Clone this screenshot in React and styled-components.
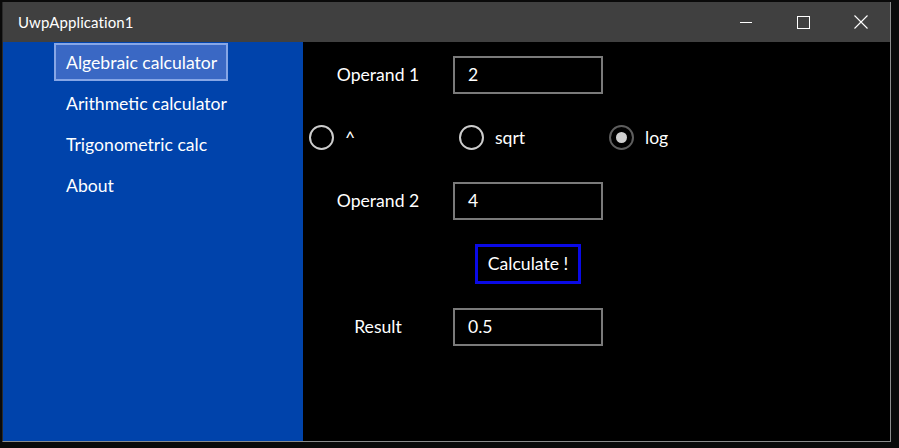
import React, { useState } from 'react';
import styled, { createGlobalStyle } from 'styled-components';

const GlobalStyle = createGlobalStyle`
  html, body {
    margin: 0;
    padding: 0;
    background: #0a0a0a;
  }
  body {
    font-family: Lato, "Open Sans", sans-serif;
  }
`;

const Desktop = styled.div`
  width: 899px;
  height: 448px;
  padding: 2px 0 0 2px;
  box-sizing: border-box;
  overflow: hidden;
`;

const Window = styled.div`
  width: 889px;
  height: 440px;
  display: flex;
  flex-direction: column;
  border-left: 1px solid #2a2a2a;
  border-right: 1px solid #8c8c8c;
  border-bottom: 1px solid #8c8c8c;
  box-sizing: border-box;
  background: #000;
`;

const TitleBar = styled.div`
  height: 40px;
  flex: 0 0 40px;
  background: #404040;
  display: flex;
  align-items: center;
  color: #fff;
`;

const Title = styled.div`
  flex: 1;
  padding-left: 15px;
  font-size: 15px;
  letter-spacing: 0.1px;
`;

const Controls = styled.div`
  display: flex;
  height: 100%;
`;

const ControlButton = styled.div`
  width: 57.5px;
  height: 100%;
  display: flex;
  align-items: center;
  justify-content: center;
`;

const Body = styled.div`
  flex: 1;
  display: flex;
  min-height: 0;
`;

const Sidebar = styled.nav`
  width: 300px;
  flex: 0 0 300px;
  background: #0043ab;
  padding: 1px 0 0 51px;
  box-sizing: border-box;
  display: flex;
  flex-direction: column;
  align-items: flex-start;
  gap: 3px;
`;

const NavItem = styled.div`
  height: 38px;
  box-sizing: border-box;
  display: flex;
  align-items: center;
  padding: 1px 9px 0 10px;
  color: #fff;
  font-size: 17.6px;
  border: 2px solid ${p => (p.$active ? '#86a6e6' : 'transparent')};
  background: ${p => (p.$active ? '#3a68c4' : 'transparent')};
`;

const Content = styled.main`
  flex: 1;
  background: #000;
  display: grid;
  grid-template-columns: 150px 150px 150px;
  grid-auto-rows: 63px;
  align-items: center;
  color: #fff;
  font-size: 17.6px;
  padding-top: 1px;
`;

const Label = styled.div`
  text-align: center;
`;

const Field = styled.div`
  height: 38px;
  box-sizing: border-box;
  border: 2px solid #7a7a7a;
  display: flex;
  align-items: center;
  padding-left: 13px;
`;

const RadioRow = styled.div`
  grid-column: 1 / span 3;
  display: grid;
  grid-template-columns: repeat(3, 150px);
  align-items: center;
`;

const RadioOption = styled.label`
  display: flex;
  align-items: center;
  gap: 11px;
  padding-left: 6px;
  cursor: pointer;
`;

const RadioCircle = styled.span`
  width: 25px;
  height: 25px;
  box-sizing: border-box;
  border-radius: 50%;
  border: 2px solid ${p => (p.$checked ? '#5e5e5e' : '#cdcdcd')};
  display: flex;
  align-items: center;
  justify-content: center;

  &::after {
    content: '';
    width: 11px;
    height: 11px;
    border-radius: 50%;
    background: ${p => (p.$checked ? '#cfcfcf' : 'transparent')};
  }
`;

const ButtonCell = styled.div`
  grid-column: 2;
  display: flex;
  justify-content: center;
`;

const CalcButton = styled.button`
  height: 40px;
  padding: 0 10px;
  background: #000;
  color: #fff;
  border: 3px solid #0a0ae6;
  font-family: inherit;
  font-size: 17.6px;
`;

const Spacer = styled.div``;

const navItems = ['Algebraic calculator', 'Arithmetic calculator', 'Trigonometric calc', 'About'];
const ops = ['^', 'sqrt', 'log'];

export default function App() {
  const [op, setOp] = useState('log');

  return (
    <>
      <GlobalStyle />
      <Desktop>
        <Window>
          <TitleBar>
            <Title>UwpApplication1</Title>
            <Controls>
              <ControlButton>
                <svg width="12" height="12" viewBox="0 0 12 12">
                  <path d="M0 6.5h12" stroke="#fff" strokeWidth="1" />
                </svg>
              </ControlButton>
              <ControlButton>
                <svg width="13" height="13" viewBox="0 0 13 13">
                  <rect x="0.5" y="0.5" width="12" height="12" fill="none" stroke="#fff" strokeWidth="1" />
                </svg>
              </ControlButton>
              <ControlButton>
                <svg width="14" height="14" viewBox="0 0 14 14">
                  <path d="M0.5 0.5L13.5 13.5M13.5 0.5L0.5 13.5" stroke="#fff" strokeWidth="1.1" />
                </svg>
              </ControlButton>
            </Controls>
          </TitleBar>
          <Body>
            <Sidebar>
              {navItems.map((item, i) => (
                <NavItem key={item} $active={i === 0}>{item}</NavItem>
              ))}
            </Sidebar>
            <Content>
              <Label>Operand 1</Label>
              <Field>2</Field>
              <Spacer />

              <RadioRow>
                {ops.map(o => (
                  <RadioOption key={o} onClick={() => setOp(o)}>
                    <RadioCircle $checked={op === o} />
                    <span>{o}</span>
                  </RadioOption>
                ))}
              </RadioRow>

              <Label>Operand 2</Label>
              <Field>4</Field>
              <Spacer />

              <ButtonCell>
                <CalcButton>Calculate !</CalcButton>
              </ButtonCell>
              <Spacer />

              <Label>Result</Label>
              <Field>0.5</Field>
              <Spacer />
            </Content>
          </Body>
        </Window>
      </Desktop>
    </>
  );
}
